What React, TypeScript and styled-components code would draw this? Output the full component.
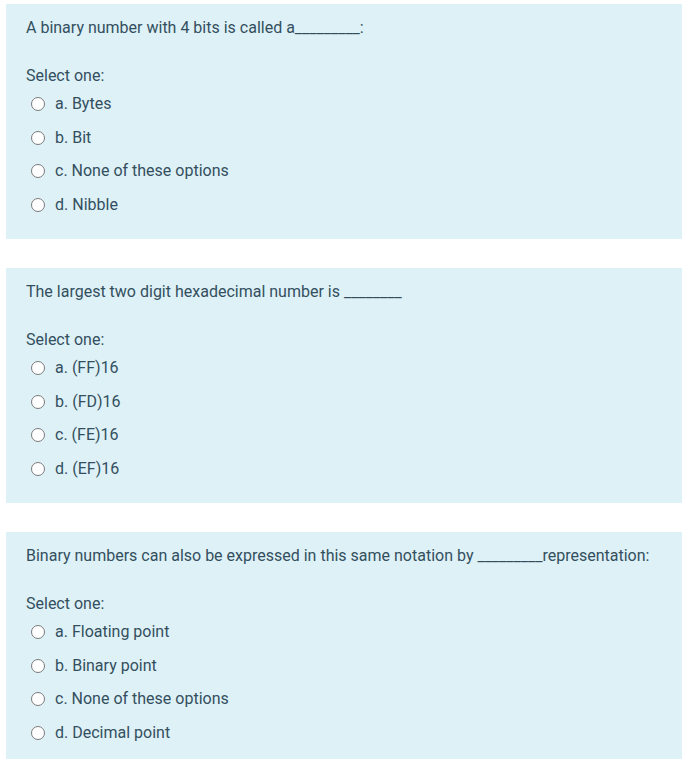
import styled, { createGlobalStyle } from 'styled-components';

const GlobalStyle = createGlobalStyle`
  html, body {
    margin: 0;
    padding: 0;
    background: #ffffff;
  }
  body {
    font-family: Roboto, "Noto Sans", sans-serif;
  }
`;

const QUESTIONS = [
  {
    text: 'A binary number with 4 bits is called a_________:',
    options: ['a. Bytes', 'b. Bit', 'c. None of these options', 'd. Nibble'],
  },
  {
    text: 'The largest two digit hexadecimal number is ________',
    options: ['a. (FF)16', 'b. (FD)16', 'c. (FE)16', 'd. (EF)16'],
  },
  {
    text: 'Binary numbers can also be expressed in this same notation by _________representation:',
    options: ['a. Floating point', 'b. Binary point', 'c. None of these options', 'd. Decimal point'],
  },
];

const App = () => {
  return (
    <>
      <GlobalStyle />
      <Page>
        {QUESTIONS.map((q, index) => (
          <Card key={index}>
            <QuestionText>{q.text}</QuestionText>
            <Prompt>Select one:</Prompt>
            <OptionList>
              {q.options.map((option) => (
                <Option key={option}>
                  <Radio />
                  <OptionLabel>{option}</OptionLabel>
                </Option>
              ))}
            </OptionList>
          </Card>
        ))}
      </Page>
    </>
  );
};

const Page = styled.main`
  display: flex;
  flex-direction: column;
  gap: 29px;

  padding: 4px 0 0 6px;
`;

const Card = styled.section`
  display: flex;
  flex-direction: column;

  height: 235px;
  padding: 14px 20px 0;
  box-sizing: border-box;

  background-color: #def1f7;
  color: #334f5e;
  font-size: 16px;
`;

const QuestionText = styled.div`
  line-height: 20px;
`;

const Prompt = styled.div`
  margin-top: 28px;
  line-height: 20px;
`;

const OptionList = styled.div`
  display: flex;
  flex-direction: column;
  gap: 13.7px;

  margin-top: 8px;
  padding-left: 5px;
`;

const Option = styled.label`
  display: flex;
  align-items: center;
  gap: 10px;

  height: 20px;
`;

const Radio = styled.span`
  flex-shrink: 0;
  width: 14px;
  height: 14px;
  border: 1px solid #7a7a7a;
  border-radius: 50%;
  box-sizing: border-box;

  background-color: #ffffff;
`;

const OptionLabel = styled.span`
  line-height: 20px;
`;

export default App;
